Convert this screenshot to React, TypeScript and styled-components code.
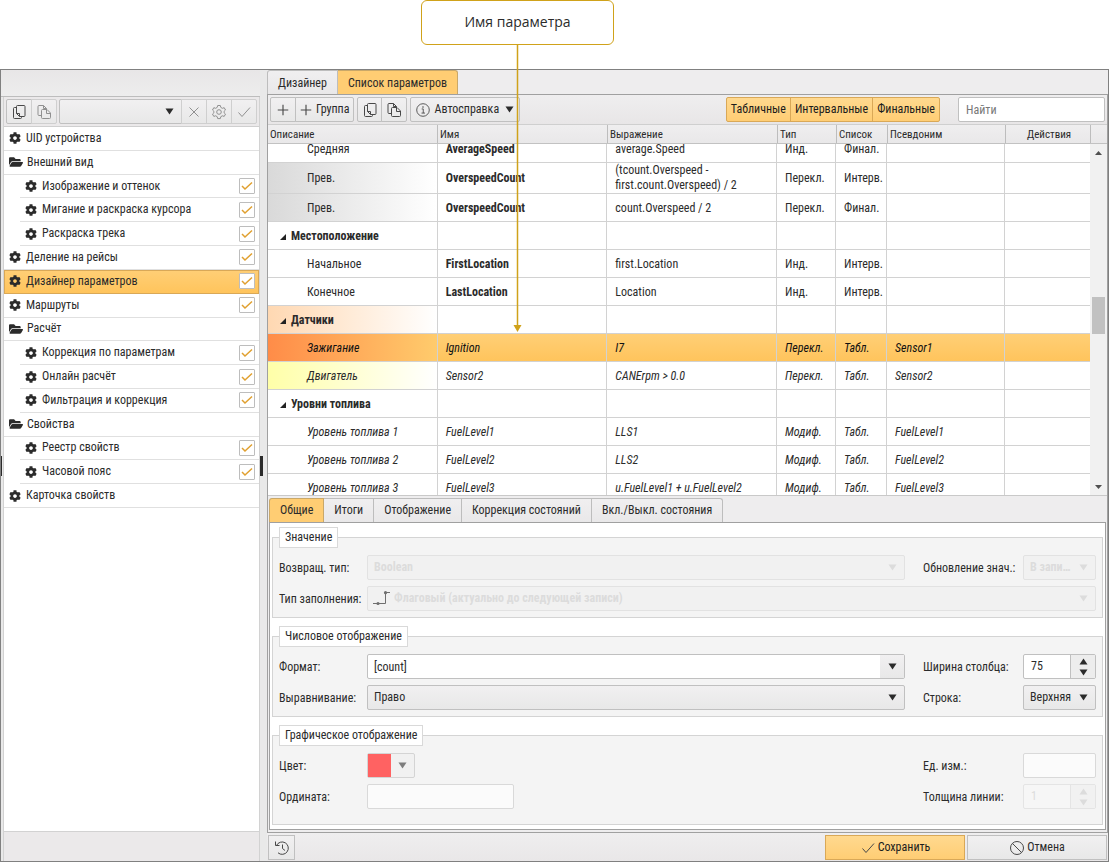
import React, { useId } from "react";
import styled, { createGlobalStyle, css } from "styled-components";
import { FaCog, FaFolderOpen } from "react-icons/fa";

const color = {
  frame: "#808080",
  edge: "#a0a0a0",
  line: "#d2d2d2",
  control: "#c0c0c0",
  chrome: "#ebe9ea",
  text: "#2b2b2b",
  icon: "#484848",
  gold: "#d0a21a",
  amber: "#ffcf76",
  amberDeep: "#ffc45c",
  amberEdge: "#d9a857",
};

const GlobalStyle = createGlobalStyle`
  *, *::before, *::after { box-sizing: border-box; }
  body {
    margin: 0;
    background: #fff;
    color: ${color.text};
    font: 400 12px/15px "Roboto Condensed", Roboto, sans-serif;
  }
  button, input, select { font: inherit; color: inherit; margin: 0; }
  svg { display: block; flex: none; }
`;

/* ---------- page frame ---------- */

const Page = styled.div`
  display: flex;
  flex-direction: column;
  height: 100vh;
  min-height: 640px;
`;

const Annotation = styled.div`
  flex: none;
  height: 69px;
  padding-left: 421px;
`;

const Callout = styled.div`
  position: relative;
  width: 193px;
  height: 45px;
  border: 1px solid ${color.gold};
  border-radius: 6px;
  background: #fff;
  display: flex;
  align-items: center;
  justify-content: center;
  font: 400 14px/20px "Open Sans", sans-serif;
  padding-bottom: 2px;
`;

const Pointer = styled.svg`
  position: absolute;
  top: 100%;
  left: 91px;
  z-index: 2;
  pointer-events: none;
`;

const Window = styled.main`
  flex: 1;
  min-height: 0;
  display: flex;
  border: 1px solid ${color.frame};
  background: #e9e8e9;
`;

const Splitter = styled.div<{ $width: number; $below?: number }>`
  flex: none;
  width: ${(p) => p.$width}px;
  padding-bottom: ${(p) => p.$below ?? 0}px;
  display: flex;
  align-items: center;
  background: #e9e9e9;
`;

const Grip = styled.span<{ $width: number }>`
  width: ${(p) => p.$width}px;
  height: 20px;
  background: #2b2b2b;
`;

/* ---------- shared controls ---------- */

const raised = css`
  background: linear-gradient(#f1f0f1, #e8e8e8);
  border: 1px solid ${color.control};
`;

const Group = styled.div<{ $grow?: boolean }>`
  display: flex;
  ${(p) => p.$grow && "flex: 1;"}
  & > * + * { margin-left: -1px; }
  & > *:first-child { border-radius: 2px 0 0 2px; }
  & > *:last-child { border-radius: 0 2px 2px 0; }
  & > *:only-child { border-radius: 2px; }
`;

const Button = styled.button<{ $tone?: "amber"; $width?: number; $muted?: boolean; $pad?: number }>`
  ${raised}
  height: 25px;
  padding: 0 ${(p) => p.$pad ?? 4}px;
  display: flex;
  align-items: center;
  justify-content: center;
  gap: ${(p) => (p.$width ? 2 : 4)}px;
  white-space: nowrap;
  & > svg { color: ${(p) => (p.$muted ? "#909090" : color.icon)}; }
  ${(p) => p.$width && `width: ${p.$width}px; padding: 0;`}
  ${(p) => p.$muted && "border-color: #cfcfcf;"}
  ${(p) =>
    p.$tone === "amber" &&
    css`
      background: linear-gradient(#ffd98f, #ffcd74);
      border-color: ${color.amberEdge};
      color: #1c1c1c;
    `}
`;

const MenuMark = styled.span`
  margin-left: 2px;
`;

const SelectBox = styled.div<{ $disabled?: boolean; $grow?: boolean }>`
  ${raised}
  display: grid;
  grid-template-columns: 1fr 24px;
  align-items: center;
  min-width: 0;
  height: 25px;
  border-radius: 2px;
  ${(p) => p.$grow && "flex: 1;"}
  ${(p) =>
    p.$disabled &&
    css`
      background: #f1f1f1;
      border-color: #e2e2e2;
      color: #dcdcdc;
      font-weight: 700;
    `}
  & > select {
    grid-area: 1 / 1 / 2 / 3;
    width: 100%;
    height: 23px;
    appearance: none;
    border: 0;
    background: none;
    color: inherit;
    opacity: 1;
    text-overflow: ellipsis;
  }
  & > .arrow {
    grid-area: 1 / 2 / 2 / 3;
    justify-self: center;
    pointer-events: none;
  }
  & > .mark {
    grid-area: 1 / 1 / 2 / 2;
    margin-left: 5px;
    pointer-events: none;
  }
`;

const Select = styled.select<{ $indent?: number; $end?: number }>`
  padding: 0 ${(p) => p.$end ?? 24}px 0 ${(p) => p.$indent ?? 6}px;
`;

const TextBox = styled.input<{ $width?: string; $soft?: boolean }>`
  width: ${(p) => p.$width ?? "100%"};
  min-width: 0;
  height: 25px;
  padding: 0 7px;
  border: 1px solid ${(p) => (p.$soft ? "#d9d9d9" : color.control)};
  border-radius: 2px;
  background: ${(p) => (p.$soft ? "#fbfbfb" : "#fff")};
  &::placeholder { color: #777; opacity: 1; }
`;

const Combo = styled.div`
  display: flex;
  border: 1px solid ${color.control};
  border-radius: 2px;
  background: #fff;
  & > input { flex: 1; min-width: 0; height: 23px; padding: 0 6px; border: 0; background: none; }
  & > button {
    width: 24px;
    padding: 0;
    border: 0;
    background: linear-gradient(#f1f0f1, #e8e8e8);
    display: grid;
    place-items: center;
  }
`;

const Spinner = styled.div<{ $disabled?: boolean }>`
  display: grid;
  grid-template-columns: 1fr 25px;
  grid-template-rows: 12px 11px;
  border: 1px solid ${(p) => (p.$disabled ? "#e4e4e4" : color.control)};
  border-radius: 2px;
  background: ${(p) => (p.$disabled ? "#f6f6f6" : "#fff")};
  color: ${(p) => (p.$disabled ? "#dcdcdc" : color.text)};
  & > input {
    grid-row: 1 / 3;
    min-width: 0;
    padding: 0 7px;
    border: 0;
    background: none;
    appearance: textfield;
  }
  & > input::-webkit-inner-spin-button { appearance: none; }
  & > button {
    padding: 0;
    border: 0;
    border-left: 1px solid ${(p) => (p.$disabled ? "#e4e4e4" : color.control)};
    background: ${(p) => (p.$disabled ? "#f1f1f1" : "#ededed")};
    display: grid;
    place-items: center;
  }
`;

/* ---------- icons ---------- */

const Triangle = ({ up, fill = color.text, className }: { up?: boolean; fill?: string; className?: string }) => (
  <svg className={className} width="9" height="7" viewBox="0 0 9 7" aria-hidden="true">
    <path d={up ? "M4.500 .5 8.500 6.500H.5z" : "M.5.5h8l-4 6z"} fill={fill} />
  </svg>
);

const Line = ({ size = 16, children }: { size?: number; children: React.ReactNode }) => (
  <svg width={size} height={size} viewBox="0 0 16 16" fill="none" stroke="currentColor" strokeWidth="1" aria-hidden="true">
    {children}
  </svg>
);

const CopyIcon = () => (
  <Line>
    <path d="M6.500 1.500h6.500a1 1 0 0 1 1 1v9a1 1 0 0 1-1 1H8.500L5.500 9.500v-7a1 1 0 0 1 1-1z M5.500 9.500h3v3" />
    <path d="M5.500 3.500h-2a1 1 0 0 0-1 1v9a1 1 0 0 0 1 1h6a1 1 0 0 0 1-1v-1" />
  </Line>
);

const PasteIcon = () => (
  <Line>
    <path d="M6.500 5.500H11l3.500 3.500v4.500a1 1 0 0 1-1 1h-7a1 1 0 0 1-1-1v-7a1 1 0 0 1 1-1z M10.500 5.500v4h4" />
    <path d="M5.500 11.500h-2.500a1 1 0 0 1-1-1v-8a1 1 0 0 1 1-1h4.500l3 3v1 M7.500 1.500v3h3" />
  </Line>
);

const PlusIcon = () => <Line size={12}><path strokeWidth="1.500" d="M8 1v14M1 8h14" /></Line>;
const CrossIcon = () => <Line><path d="m3.500 3.500 9 9M12.500 3.500l-9 9" /></Line>;
const CheckIcon = () => <Line><path d="m2.500 8.500 3.500 4 8-9" /></Line>;
const BanIcon = () => <Line><circle cx="8" cy="8" r="6.500" /><path d="m3.400 3.400 9.200 9.200" /></Line>;
const InfoIcon = () => (
  <Line size={14}>
    <circle cx="8" cy="8" r="7.200" />
    <path d="M6.500 6.800H8.300V11.500M6.300 11.500h4" />
    <circle cx="8" cy="4.500" r=".9" fill="currentColor" stroke="none" />
  </Line>
);
const HistoryIcon = () => (
  <Line>
    <path d="M2.500 5.500A6.200 6.200 0 1 1 4 12.800M1.500 1.500v4h4M8.500 4.500v4l2.500 2" />
  </Line>
);
const GearIcon = () => (
  <Line>
    <circle cx="8" cy="8" r="2.300" />
    <path d="M6.700 1.500h2.600l.5 1.900 1.500.9 1.900-.6 1.300 2.300-1.400 1.300v1.500l1.400 1.300-1.300 2.300-1.900-.6-1.500.9-.5 1.900H6.700l-.5-1.900-1.500-.9-1.900.6-1.300-2.300 1.400-1.300V7.300L1.500 6l1.300-2.300 1.900.6 1.500-.9z" />
  </Line>
);
const StepIcon = () => (
  <svg className="mark" width="17" height="15" viewBox="0 0 17 15" fill="none" stroke="#6f6f6f" aria-hidden="true">
    <path d="M0 12.500h12.500V1.500H17" />
    <circle cx="5" cy="12.500" r="1.600" fill="#6f6f6f" stroke="none" />
    <circle cx="12.500" cy="1.700" r="1.600" fill="#6f6f6f" stroke="none" />
  </svg>
);

/* ---------- left panel ---------- */

const Sidebar = styled.aside`
  flex: none;
  width: 259px;
  display: flex;
  flex-direction: column;
`;

const SideHead = styled.div`
  flex: none;
  height: 27px;
  background: linear-gradient(#e8e6e7, #ededed);
  border-bottom: 1px solid #bdbdbd;
`;

const SideBody = styled.div`
  flex: 1;
  min-height: 0;
  display: flex;
`;

const SideColumn = styled.div`
  flex: 1;
  min-width: 0;
  display: flex;
  flex-direction: column;
  border: solid ${color.line};
  border-width: 0 1px;
`;

const SideTools = styled.div`
  flex: none;
  display: flex;
  gap: 2px;
  height: 30px;
  padding: 2px;
  background: ${color.chrome};
  border-bottom: 1px solid #cfcfcf;
`;

const TreeArea = styled.div`
  flex: 1;
  min-height: 0;
  background: #fff;
  border-bottom: 1px solid ${color.line};
`;

const Tree = styled.ul`
  list-style: none;
  margin: 0;
  padding: 0;
  height: 381px;
  display: grid;
  grid-auto-rows: 1fr;
`;

const TreeRow = styled.li<{ $child?: boolean; $selected?: boolean }>`
  display: flex;
  align-items: center;
  min-height: 0;
  margin-left: ${(p) => (p.$child ? 16 : 0)}px;
  padding-right: 4px;
  border-bottom: 1px solid #e0e0e0;
  ${(p) =>
    p.$selected &&
    css`
      background: linear-gradient(${color.amber}, ${color.amberDeep});
      border-bottom-color: ${color.amberEdge};
      box-shadow: inset 1px 1px ${color.amberEdge}, inset -1px 0 ${color.amberEdge};
    `}
`;

const TreeLink = styled.button<{ $folder?: boolean }>`
  flex: 1;
  display: flex;
  align-items: center;
  gap: ${(p) => (p.$folder ? 4 : 5)}px;
  padding: 0 0 0 5px;
  border: 0;
  background: none;
  text-align: left;
  white-space: nowrap;
`;

const Tick = styled.span`
  display: grid;
  width: 16px;
  height: 16px;
  & > input {
    grid-area: 1 / 1;
    appearance: none;
    border: 1px solid #bdbdbd;
    border-radius: 1px;
    background: #fff;
  }
  & > svg { grid-area: 1 / 1; pointer-events: none; place-self: center; }
`;

const SideFoot = styled.div`
  flex: none;
  height: 29px;
  background: ${color.chrome};
`;

type Node = { name: string; kind?: "folder"; child?: boolean; tick?: boolean; selected?: boolean };

const nodes: Node[] = [
  { name: "UID устройства" },
  { name: "Внешний вид", kind: "folder" },
  { name: "Изображение и оттенок", child: true, tick: true },
  { name: "Мигание и раскраска курсора", child: true, tick: true },
  { name: "Раскраска трека", child: true, tick: true },
  { name: "Деление на рейсы", tick: true },
  { name: "Дизайнер параметров", tick: true, selected: true },
  { name: "Маршруты", tick: true },
  { name: "Расчёт", kind: "folder" },
  { name: "Коррекция по параметрам", child: true, tick: true },
  { name: "Онлайн расчёт", child: true, tick: true },
  { name: "Фильтрация и коррекция", child: true, tick: true },
  { name: "Свойства", kind: "folder" },
  { name: "Реестр свойств", child: true, tick: true },
  { name: "Часовой пояс", child: true, tick: true },
  { name: "Карточка свойств" },
];

const SettingsTree = () => (
  <Sidebar>
    <SideHead />
    <SideBody>
      <Splitter $width={2} $below={27}><Grip $width={1} /></Splitter>
      <SideColumn>
        <SideTools>
          <Group>
            <Button $width={26} aria-label="Копировать"><CopyIcon /></Button>
            <Button $width={26} $muted aria-label="Вставить"><PasteIcon /></Button>
          </Group>
          <Group $grow>
            <SelectBox $grow>
              <Select aria-label="Шаблон" />
              <Triangle className="arrow" />
            </SelectBox>
            <Button $width={26} $muted aria-label="Удалить"><CrossIcon /></Button>
            <Button $width={26} $muted aria-label="Настроить"><GearIcon /></Button>
            <Button $width={26} $muted aria-label="Применить"><CheckIcon /></Button>
          </Group>
        </SideTools>
        <TreeArea>
          <Tree>
            {nodes.map((n) => (
              <TreeRow key={n.name} $child={n.child} $selected={n.selected}>
                <TreeLink $folder={n.kind === "folder"}>
                  {n.kind === "folder" ? <FaFolderOpen size={14} /> : <FaCog size={12} />}
                  {n.name}
                </TreeLink>
                {n.tick && (
                  <Tick>
                    <input type="checkbox" defaultChecked aria-label={n.name} />
                    <svg width="12" height="12" viewBox="0 0 12 12" fill="none" stroke="#e0a030" strokeWidth="1.500" aria-hidden="true">
                      <path d="m1 6 3 3L11 2.500" />
                    </svg>
                  </Tick>
                )}
              </TreeRow>
            ))}
          </Tree>
        </TreeArea>
        <SideFoot />
      </SideColumn>
    </SideBody>
  </Sidebar>
);

/* ---------- right panel ---------- */

const Workspace = styled.section`
  flex: 1;
  min-width: 0;
  display: flex;
  flex-direction: column;
  background: #eeedee;
`;

const Tabs = styled.div<{ $inner?: boolean }>`
  flex: none;
  display: flex;
  align-items: flex-end;
  height: ${(p) => (p.$inner ? 26 : 24)}px;
  ${(p) => p.$inner && "padding-left: 1px;"}
  & > button { padding-top: ${(p) => (p.$inner ? 0 : 2)}px; }
`;

const Tab = styled.button<{ $active?: boolean }>`
  height: 24px;
  padding: 0 10px;
  border: solid ${(p) => (p.$active ? "#c9a869" : "#bdbdbd")};
  border-width: 1px 1px 0 0;
  background: ${(p) => (p.$active ? "#ffcd73" : "linear-gradient(#f0eff0, #e9e8e9)")};
  white-space: nowrap;
  &:first-child { border-left-width: 1px; border-top-left-radius: 3px; }
  &:last-child { border-top-right-radius: 3px; }
`;

const Sheet = styled.div`
  flex: 1;
  min-height: 0;
  display: flex;
  flex-direction: column;
  padding-bottom: 2px;
  border: 1px solid ${color.edge};
`;

const Tools = styled.div`
  flex: none;
  display: flex;
  gap: 3px;
  padding: 2px;
  background: linear-gradient(#efeeef, #e8e6e7);
  border-bottom: 1px solid #cfcfcf;
`;

const Filters = styled.div`
  margin: 0 15px 0 auto;
  display: flex;
`;

const TableArea = styled.div`
  flex: 1;
  min-height: 0;
  display: flex;
  flex-direction: column;
  background: #fff;
  border-bottom: 1px solid #c9c9c9;
`;

const HeadStrip = styled.div`
  flex: none;
  display: flex;
  background: linear-gradient(#efeeef, #e9e8e9);
  border-bottom: 1px solid #c2c2c2;
  padding-right: 16px;
`;

const Viewport = styled.div`
  flex: 1;
  min-height: 0;
  display: flex;
`;

const Clip = styled.div`
  flex: 1;
  min-width: 0;
  overflow: hidden;
`;

const Table = styled.table<{ $scrolled?: number }>`
  width: 100%;
  table-layout: fixed;
  border-spacing: 0;
  margin-top: ${(p) => -(p.$scrolled ?? 0)}px;
  th, td { padding: 0; text-align: left; overflow: hidden; }
  th {
    height: 18px;
    padding-left: 2px;
    font-size: 11px;
    font-weight: 400;
    border-right: 1px solid #bdbdbd;
  }
  th:last-child { text-align: center; }
`;

const rowTint: Record<string, string> = {
  grey: "linear-gradient(90deg, #d9d9d9, #fff)",
  peach: "linear-gradient(90deg, #ffd8b2, #fff)",
  lemon: "linear-gradient(90deg, #ffffa8, #fff)",
  orange: "linear-gradient(90deg, #ff8c48, #ffcb6c)",
};

const Row = styled.tr<{ $italic?: boolean; $selected?: boolean; $tint?: string; $strong?: boolean; $tall?: boolean }>`
  ${(p) => p.$italic && "font-style: italic;"}
  td {
    height: 28px;
    padding: ${(p) => (p.$tall ? 0 : 2)}px 0 0 8px;
    border: solid ${color.line};
    border-width: 0 1px 1px 0;
    ${(p) =>
      p.$selected &&
      css`
        background: linear-gradient(${color.amber}, ${color.amberDeep});
        color: #111;
      `}
  }
  td:first-child { padding-left: 39px; ${(p) => p.$tint && `background: ${rowTint[p.$tint]};`} }
  td:nth-child(2) { ${(p) => p.$strong && "font-weight: 700;"} white-space: nowrap; }
  td:last-child { border-right: 0; }
`;

const GroupRow = styled(Row)`
  td:first-child { padding-left: 12px; }
`;

const GroupName = styled.button`
  display: flex;
  align-items: center;
  gap: 5px;
  padding: 0;
  border: 0;
  background: none;
  font-weight: 700;
`;

const ScrollBar = styled.div`
  flex: none;
  width: 17px;
  display: flex;
  flex-direction: column;
  align-items: center;
  background: #f1f1f1;
`;

const ScrollEnd = styled.button`
  width: 17px;
  height: 17px;
  padding: 0;
  border: 0;
  background: none;
  color: #505050;
  display: grid;
  place-items: center;
`;

const Track = styled.div<{ $grow: number }>`
  flex: ${(p) => p.$grow} 1 0;
`;

const Thumb = styled.div`
  width: 13px;
  height: 37px;
  background: #c1c1c1;
`;

type Param = {
  group?: string;
  cells?: string[];
  italic?: boolean;
  strong?: boolean;
  selected?: boolean;
  tall?: boolean;
  tint?: string;
};

const params: Param[] = [
  { cells: ["Средняя", "AverageSpeed", "average.Speed", "Инд.", "Финал.", ""], strong: true },
  { cells: ["Прев.", "OverspeedCount", "(tcount.Overspeed - first.count.Overspeed) / 2", "Перекл.", "Интерв.", ""], strong: true, tint: "grey", tall: true },
  { cells: ["Прев.", "OverspeedCount", "count.Overspeed / 2", "Перекл.", "Финал.", ""], strong: true, tint: "grey" },
  { group: "Местоположение" },
  { cells: ["Начальное", "FirstLocation", "first.Location", "Инд.", "Интерв.", ""], strong: true },
  { cells: ["Конечное", "LastLocation", "Location", "Инд.", "Интерв.", ""], strong: true },
  { group: "Датчики", tint: "peach" },
  { cells: ["Зажигание", "Ignition", "I7", "Перекл.", "Табл.", "Sensor1"], italic: true, selected: true, tint: "orange" },
  { cells: ["Двигатель", "Sensor2", "CANErpm > 0.0", "Перекл.", "Табл.", "Sensor2"], italic: true, tint: "lemon" },
  { group: "Уровни топлива" },
  { cells: ["Уровень топлива 1", "FuelLevel1", "LLS1", "Модиф.", "Табл.", "FuelLevel1"], italic: true },
  { cells: ["Уровень топлива 2", "FuelLevel2", "LLS2", "Модиф.", "Табл.", "FuelLevel2"], italic: true },
  { cells: ["Уровень топлива 3", "FuelLevel3", "u.FuelLevel1 + u.FuelLevel2", "Модиф.", "Табл.", "FuelLevel3"], italic: true },
];

const Columns = () => (
  <colgroup>
    <col />
    <col />
    <col />
    <col width="59" />
    <col width="51" />
    <col width="118" />
    <col width="85" />
  </colgroup>
);

const ParamTable = () => (
  <TableArea>
    <HeadStrip>
      <Table>
        <Columns />
        <thead>
          <tr>
            {["Описание", "Имя", "Выражение", "Тип", "Список", "Псевдоним", "Действия"].map((h) => (
              <th key={h} scope="col">{h}</th>
            ))}
          </tr>
        </thead>
      </Table>
    </HeadStrip>
    <Viewport>
      <Clip>
        <Table $scrolled={9} aria-label="Список параметров">
          <Columns />
          <tbody>
            {params.map((p, i) =>
              p.group ? (
                <GroupRow key={i} $tint={p.tint}>
                  <td>
                    <GroupName>
                      <svg width="6" height="6" viewBox="0 0 6 6" aria-hidden="true"><path d="M6 0v6H0z" fill="#222" /></svg>
                      {p.group}
                    </GroupName>
                  </td>
                  <td /><td /><td /><td /><td /><td />
                </GroupRow>
              ) : (
                <Row key={i} $italic={p.italic} $strong={p.strong} $selected={p.selected} $tint={p.tint} $tall={p.tall}>
                  {p.cells!.map((c, j) => <td key={j}>{c}</td>)}
                  <td />
                </Row>
              )
            )}
          </tbody>
        </Table>
      </Clip>
      <ScrollBar>
        <ScrollEnd aria-label="Вверх"><svg width="7" height="4" viewBox="0 0 7 4"><path d="M3.500 0 7 4H0z" fill="currentColor" /></svg></ScrollEnd>
        <Track $grow={136} />
        <Thumb />
        <Track $grow={145} />
        <ScrollEnd aria-label="Вниз"><svg width="7" height="4" viewBox="0 0 7 4"><path d="M0 0h7L3.500 4z" fill="currentColor" /></svg></ScrollEnd>
      </ScrollBar>
    </Viewport>
  </TableArea>
);

const Details = styled.form`
  flex: none;
  display: flex;
  flex-direction: column;
  gap: 8px;
  margin: 0 1px;
  padding: 4px 2px;
  background: #fff;
  border: 1px solid ${color.edge};
`;

const FieldSet = styled.fieldset<{ $roomy?: boolean }>`
  margin: 0;
  min-width: 0;
  padding: 7px 6px ${(p) => (p.$roomy ? 15 : 6)}px;
  border: 1px solid #d4d4d4;
  background: #f4f4f4;
`;

const Legend = styled.legend`
  padding: 2px 5px;
  border: 1px solid #d9d9d9;
  background: #fff;
`;

const Fields = styled.div`
  display: grid;
  grid-template-columns: 88px 1fr 118px 73px;
  grid-auto-rows: 25px;
  row-gap: 6px;
  align-items: center;
`;

const Label = styled.label<{ $second?: boolean }>`
  white-space: nowrap;
  padding: 2px 0 0 ${(p) => (p.$second ? 18 : 0)}px;
`;

const Wide = styled.div`
  grid-column: 2 / -1;
`;

const ColorButton = styled.button`
  width: 48px;
  height: 25px;
  padding: 0;
  display: grid;
  grid-template-columns: 23px 1fr;
  align-items: center;
  justify-items: center;
  border: 1px solid #d4d4d4;
  border-radius: 2px;
  background: #f1f1f1;
`;

const Swatch = styled.span`
  width: 23px;
  height: 23px;
  background: #ff6262;
`;

const Footer = styled.footer`
  flex: none;
  display: flex;
  gap: 2px;
  padding: 2px 1px 1px;
  background: linear-gradient(#efeeef, #e9e7e8);
`;

const Spacer = styled.div`
  flex: 1;
`;

const SelectField = ({ id, value, disabled, mark, indent, end }: { id: string; value: string; disabled?: boolean; mark?: boolean; indent?: number; end?: number }) => (
  <SelectBox $disabled={disabled}>
    <Select id={id} disabled={disabled} $indent={indent} $end={end}><option>{value}</option></Select>
    {mark && <StepIcon />}
    <Triangle className="arrow" fill={disabled ? "#dcdcdc" : undefined} />
  </SelectBox>
);

const NumberField = ({ id, value, disabled }: { id: string; value: number; disabled?: boolean }) => (
  <Spinner $disabled={disabled}>
    <input id={id} type="number" defaultValue={value} disabled={disabled} />
    <button type="button" disabled={disabled} aria-label="Больше"><Triangle up fill={disabled ? "#dcdcdc" : undefined} /></button>
    <button type="button" disabled={disabled} aria-label="Меньше"><Triangle fill={disabled ? "#dcdcdc" : undefined} /></button>
  </Spinner>
);

const DetailsForm = () => {
  const id = useId();
  return (
    <Details>
      <FieldSet>
        <Legend>Значение</Legend>
        <Fields>
          <Label htmlFor={id + "type"}>Возвращ. тип:</Label>
          <SelectField id={id + "type"} value="Boolean" disabled />
          <Label $second htmlFor={id + "upd"}>Обновление знач.:</Label>
          <SelectField id={id + "upd"} value="В записи" disabled end={22} />
          <Label htmlFor={id + "fill"}>Тип заполнения:</Label>
          <Wide><SelectField id={id + "fill"} value="Флаговый (актуально до следующей записи)" disabled mark indent={26} /></Wide>
        </Fields>
      </FieldSet>
      <FieldSet>
        <Legend>Числовое отображение</Legend>
        <Fields>
          <Label htmlFor={id + "fmt"}>Формат:</Label>
          <Combo>
            <input id={id + "fmt"} defaultValue="[count]" />
            <button type="button" aria-label="Выбрать формат"><Triangle /></button>
          </Combo>
          <Label $second htmlFor={id + "w"}>Ширина столбца:</Label>
          <NumberField id={id + "w"} value={75} />
          <Label htmlFor={id + "al"}>Выравнивание:</Label>
          <SelectField id={id + "al"} value="Право" />
          <Label $second htmlFor={id + "row"}>Строка:</Label>
          <SelectField id={id + "row"} value="Верхняя" end={18} />
        </Fields>
      </FieldSet>
      <FieldSet $roomy>
        <Legend>Графическое отображение</Legend>
        <Fields>
          <Label htmlFor={id + "clr"}>Цвет:</Label>
          <ColorButton id={id + "clr"} type="button"><Swatch /><Triangle fill="#7d7d7d" /></ColorButton>
          <Label $second htmlFor={id + "unit"}>Ед. изм.:</Label>
          <TextBox id={id + "unit"} $soft />
          <Label htmlFor={id + "ord"}>Ордината:</Label>
          <TextBox id={id + "ord"} $soft $width="147px" />
          <Label $second htmlFor={id + "th"}>Толщина линии:</Label>
          <NumberField id={id + "th"} value={1} disabled />
        </Fields>
      </FieldSet>
    </Details>
  );
};

export default function App() {
  return (
    <Page>
      <GlobalStyle />
      <Annotation>
        <Callout>
          Имя параметра
          <Pointer width="9" height="288" viewBox="0 0 9 288" aria-hidden="true">
            <path d="M4.500 0v282" stroke={color.gold} strokeWidth="1.500" />
            <path d="M.5 281h8l-4 7z" fill={color.gold} />
          </Pointer>
        </Callout>
      </Annotation>
      <Window>
        <SettingsTree />
        <Splitter $width={7}><Grip $width={3} /></Splitter>
        <Workspace>
          <Tabs role="tablist">
            <Tab role="tab">Дизайнер</Tab>
            <Tab role="tab" $active aria-selected>Список параметров</Tab>
          </Tabs>
          <Sheet>
            <Tools>
              <Group>
                <Button $width={26} aria-label="Добавить"><PlusIcon /></Button>
                <Button><PlusIcon />Группа</Button>
              </Group>
              <Group>
                <Button $width={25} aria-label="Копировать"><CopyIcon /></Button>
                <Button $width={26} aria-label="Вставить"><PasteIcon /></Button>
              </Group>
              <Group>
                <Button $pad={5}><InfoIcon />Автосправка<MenuMark><Triangle /></MenuMark></Button>
              </Group>
              <Filters>
                <Group>
                  <Button $tone="amber" aria-pressed>Табличные</Button>
                  <Button $tone="amber" aria-pressed>Интервальные</Button>
                  <Button $tone="amber" aria-pressed>Финальные</Button>
                </Group>
              </Filters>
              <TextBox type="search" placeholder="Найти" aria-label="Найти" $width="147px" />
            </Tools>
            <ParamTable />
            <Tabs role="tablist" $inner>
              <Tab role="tab" $active aria-selected>Общие</Tab>
              <Tab role="tab">Итоги</Tab>
              <Tab role="tab">Отображение</Tab>
              <Tab role="tab">Коррекция состояний</Tab>
              <Tab role="tab">Вкл./Выкл. состояния</Tab>
            </Tabs>
            <DetailsForm />
          </Sheet>
          <Footer>
            <Button $width={27} aria-label="История"><HistoryIcon /></Button>
            <Spacer />
            <Button $tone="amber" $width={140}><CheckIcon />Сохранить</Button>
            <Button $width={140}><BanIcon />Отмена</Button>
          </Footer>
        </Workspace>
      </Window>
    </Page>
  );
}
